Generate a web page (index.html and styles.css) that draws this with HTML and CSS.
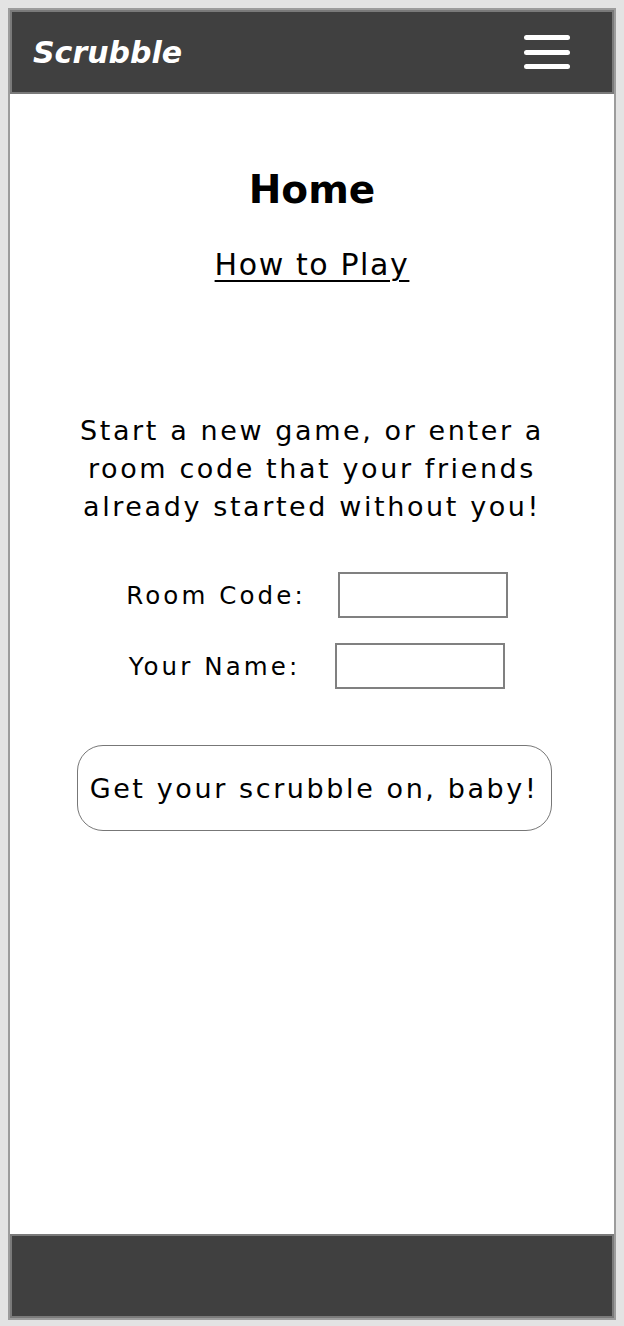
FILE: index.html
```html
<!DOCTYPE html>
<html lang="en">
<head>
<meta charset="utf-8">
<title>Scrubble</title>
<link rel="stylesheet" href="styles.css">
</head>
<body>
<div class="frame">
  <header class="topbar">
    <span class="brand">Scrubble</span>
    <button class="menu" aria-label="Menu">
      <span class="bar"></span>
      <span class="bar"></span>
      <span class="bar"></span>
    </button>
  </header>
  <main class="content">
    <h1 class="title">Home</h1>
    <a class="howto" href="#">How to Play</a>
    <p class="intro">Start a new game, or enter a<br>room code that your friends<br>already started without you!</p>
    <form class="join">
      <div class="field">
        <label class="label" for="room">Room Code:</label>
        <input class="input" id="room" type="text">
      </div>
      <div class="field field-name">
        <label class="label" for="name">Your Name:</label>
        <input class="input" id="name" type="text">
      </div>
      <button class="go" type="button">Get your scrubble on, baby!</button>
    </form>
  </main>
  <footer class="bottombar"></footer>
</div>
</body>
</html>
```

FILE: styles.css
```css
html, body {
  margin: 0;
  padding: 0;
}
body {
  background: #e3e3e3;
  padding: 8px 8px 6px;
  font-family: "DejaVu Sans", Inter, sans-serif;
  color: #000;
}
.frame {
  box-sizing: border-box;
  height: 1312px;
  border: 2px solid #9c9c9c;
  background: #fff;
  display: flex;
  flex-direction: column;
}
.topbar {
  box-sizing: border-box;
  height: 84px;
  background: #404040;
  border: 2px solid #7a7a7a;
  display: flex;
  align-items: center;
  justify-content: space-between;
  padding: 0 42px 0 21px;
}
.brand {
  color: #fff;
  font-weight: 700;
  font-style: italic;
  font-size: 30px;
}
.menu {
  background: none;
  border: 0;
  padding: 0;
  display: flex;
  flex-direction: column;
  gap: 9.5px;
  cursor: pointer;
}
.bar {
  display: block;
  width: 46px;
  height: 5px;
  border-radius: 2.5px;
  background: #fff;
}
.content {
  flex: 1;
  display: flex;
  flex-direction: column;
  align-items: center;
  padding-top: 72px;
}
.title {
  margin: 0;
  font-size: 39px;
  line-height: 48px;
  font-weight: 700;
}
.howto {
  margin-top: 31px;
  font-size: 30px;
  line-height: 40px;
  letter-spacing: 1.6px;
  color: #000;
  text-decoration: underline;
  text-underline-offset: 5px;
  text-decoration-thickness: 2px;
}
.intro {
  margin: 127px 0 0;
  font-size: 27px;
  line-height: 38px;
  letter-spacing: 2.6px;
  text-align: center;
}
.join {
  margin-top: 46px;
  display: flex;
  flex-direction: column;
  align-items: center;
}
.field {
  display: flex;
  align-items: center;
  gap: 32px;
  height: 46px;
  padding-left: 10px;
}
.field-name {
  margin-top: 25px;
  gap: 35px;
}
.label {
  font-size: 24.5px;
  letter-spacing: 3.1px;
}
.input {
  box-sizing: border-box;
  width: 170px;
  height: 46px;
  border: 2px solid #808080;
  border-radius: 0;
  background: #fff;
  margin: 0;
}
.go {
  margin: 56px 0 0 4px;
  box-sizing: border-box;
  width: 475px;
  height: 86px;
  border: 1px solid #777;
  border-radius: 26px;
  background: #fff;
  font-family: inherit;
  font-size: 27px;
  letter-spacing: 2.6px;
  color: #000;
  cursor: pointer;
  padding: 0;
}
.bottombar {
  box-sizing: border-box;
  height: 84px;
  background: #404040;
  border: 2px solid #7a7a7a;
}
```
